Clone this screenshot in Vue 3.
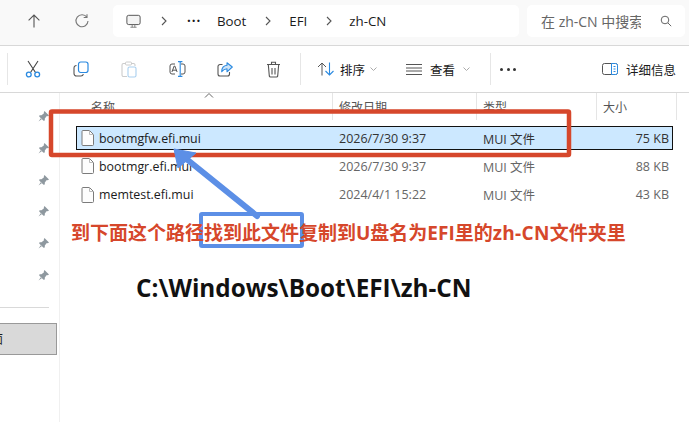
<script setup>
const rows = [
  { name: 'bootmgfw.efi.mui', date: '2026/7/30 9:37', type: 'MUI 文件', size: '75 KB', selected: true },
  { name: 'bootmgr.efi.mui', date: '2026/7/30 9:37', type: 'MUI 文件', size: '88 KB', selected: false },
  { name: 'memtest.efi.mui', date: '2024/4/1 15:22', type: 'MUI 文件', size: '43 KB', selected: false },
]
const pins = 6
</script>

<template>
  <div class="page">
    <header class="topbar">
      <button class="nav">
        <svg width="16" height="16" viewBox="0 0 16 16"><path d="M8 14.500V2M2.600 7.400 8 2l5.400 5.400" class="ln" /></svg>
      </button>
      <button class="nav">
        <svg width="16" height="16" viewBox="0 0 16 16"><path d="M12.900 4.300A6 6 0 1 0 14 8M13 1.200v3.300H9.700" class="ln lighter" /></svg>
      </button>
      <div class="address">
        <svg class="monitor" width="15" height="15" viewBox="0 0 17 16"><rect x="1" y="1" width="15" height="10.500" rx="2" fill="#f4f4f4" stroke="#555" stroke-width="1.100" /><path d="M5 14.500h7M7 11.500v3M10 11.500v3" stroke="#777" fill="none" /></svg>
        <svg class="chev c1" width="6" height="10" viewBox="0 0 6 10"><path d="m1 1 4 4-4 4" class="ln" /></svg>
        <span class="crumb-dots">···</span>
        <span class="crumb boot">Boot</span>
        <svg class="chev c2" width="6" height="10" viewBox="0 0 6 10"><path d="m1 1 4 4-4 4" class="ln" /></svg>
        <span class="crumb efi">EFI</span>
        <svg class="chev c3" width="6" height="10" viewBox="0 0 6 10"><path d="m1 1 4 4-4 4" class="ln" /></svg>
        <span class="crumb zh">zh-CN</span>
      </div>
      <div class="search">
        <span class="search-text">在 zh-CN 中搜索</span>
        <svg width="12" height="12" viewBox="0 0 12 12"><circle cx="5" cy="5" r="3.800" fill="none" stroke="#666" /><path d="m8 8 3.200 3.200" stroke="#666" /></svg>
      </div>
    </header>

    <div class="toolbar">
      <i class="sep first"></i>
      <button class="tool">
        <svg width="16" height="18" viewBox="0 0 16 18"><path d="M3 1l7.500 11.500M13 1 5.500 12.500" stroke="#444" fill="none" stroke-width="1.100" /><circle cx="3.800" cy="14.500" r="2.400" fill="none" stroke="#2b8ae0" stroke-width="1.300" /><circle cx="12.200" cy="14.500" r="2.400" fill="none" stroke="#2b8ae0" stroke-width="1.300" /></svg>
      </button>
      <button class="tool">
        <svg width="16" height="16" viewBox="0 0 16 16"><rect x="5.500" y="1" width="9.500" height="10.500" rx="2.200" fill="none" stroke="#2b8ae0" stroke-width="1.200" /><path d="M3.500 4.500 A2.500 2.500 0 0 0 1 7v5.500A2.500 2.500 0 0 0 3.500 15H8a2.500 2.500 0 0 0 2.400-1.800" fill="none" stroke="#555" stroke-width="1.100" /></svg>
      </button>
      <button class="tool">
        <svg width="16" height="17" viewBox="0 0 16 17"><path d="M5 2.500H2.500A1.500 1.500 0 0 0 1 4v10a1.500 1.500 0 0 0 1.500 1.500H6M11 2.500h1.500A1.500 1.500 0 0 1 14 4v1" fill="none" stroke="#ccc" stroke-width="1.100" /><rect x="4.500" y="1" width="6" height="3" rx="1" fill="#fff" stroke="#ccc" /><rect x="7" y="6" width="8" height="10" rx="1.500" fill="none" stroke="#a9cfef" stroke-width="1.100" /></svg>
      </button>
      <button class="tool">
        <svg width="17" height="16" viewBox="0 0 17 16"><path d="M6 3H3a2 2 0 0 0-2 2v6a2 2 0 0 0 2 2h3M12 3h2a2 2 0 0 1 2 2v6a2 2 0 0 1-2 2h-2" fill="none" stroke="#555" /><path d="M2.900 11 5.200 5h.6l2.300 6M3.700 9.200h3.600" fill="none" stroke="#555" /><path d="M9 .6h2.200m0 0h2.200M11.200.6v14.800M9 15.400h4.400" fill="none" stroke="#2b8ae0" stroke-width="1.100" /></svg>
      </button>
      <button class="tool">
        <svg width="16" height="15" viewBox="0 0 16 15"><path d="M5.500 2.500H3a2 2 0 0 0-2 2V12a2 2 0 0 0 2 2h7.500a2 2 0 0 0 2-2V10" fill="none" stroke="#555" stroke-width="1.100" /><path d="M15.300 5 10 .8v2.500C6.500 3.600 4.700 6.300 4.700 9.800c1.400-2 3-2.900 5.300-3v3z" fill="#cfe4f7" stroke="#2b8ae0" stroke-width="1.100" stroke-linejoin="round" /></svg>
      </button>
      <button class="tool">
        <svg width="15" height="17" viewBox="0 0 15 17"><path d="M1 3.500h13M5.500 3.500V1.300h4v2.200M2.300 3.500l1 11.500a1.300 1.300 0 0 0 1.300 1h5.800a1.300 1.300 0 0 0 1.300-1l1-11.500M6 7v6.500M9 7v6.500" fill="none" stroke="#555" stroke-width="1.100" /></svg>
      </button>
      <i class="sep second"></i>
      <div class="group sort">
        <svg width="18" height="14" viewBox="0 0 18 14"><path d="M5 13.500V1M1 5l4-4 4 4" fill="none" stroke="#555" /><path d="M12.500 .5V13M8.500 9l4 4 4-4" fill="none" stroke="#2b8ae0" stroke-width="1.100" /></svg>
        <span>排序</span>
        <svg width="7" height="4" viewBox="0 0 7 4"><path d="m.5.500 3 3 3-3" fill="none" stroke="#aaa" /></svg>
      </div>
      <div class="group view">
        <svg width="16" height="11" viewBox="0 0 16 11"><path d="M0 .5h16M0 4h16M0 7h16M0 10.500h16" stroke="#555" fill="none" /></svg>
        <span>查看</span>
        <svg width="7" height="4" viewBox="0 0 7 4"><path d="m.5.500 3 3 3-3" fill="none" stroke="#aaa" /></svg>
      </div>
      <i class="sep third"></i>
      <span class="more">
        <b></b><b></b><b></b>
      </span>
      <div class="details">
        <svg width="16" height="12" viewBox="0 0 16 12"><rect x=".5" y=".5" width="15" height="11" rx="2" fill="none" stroke="#555" /><path d="M9.500 .5h4a2 2 0 0 1 2 2v7a2 2 0 0 1-2 2h-4z" fill="#fff" stroke="#2b8ae0" /><path d="M11.500 3.500h2M11.500 6h2M11.500 8.500h2" stroke="#2b8ae0" /></svg>
        <span>详细信息</span>
      </div>
    </div>

    <div class="body">
      <aside class="side">
        <div class="pins">
          <svg v-for="n in pins" :key="n" width="11" height="11" viewBox="0 0 11 11"><path d="M6.500 0 11 4.500 9.800 5.200 8.800 5 6.800 7.500 6.800 9.500 5.500 9.800 1.200 5.500 1.500 4.200 3.500 4.200 6 2.200 5.800 1.200ZM3 7 .5 10.500 4 8Z" fill="#8e989f" /></svg>
        </div>
        <hr class="side-line" />
        <div class="side-item"><span>桌面</span></div>
      </aside>

      <main class="content">
        <div class="head">
          <svg class="caret" width="10" height="5" viewBox="0 0 10 5"><path d="m1 4.500 4-4 4 4" fill="none" stroke="#666" /></svg>
          <span class="h-name">名称</span>
          <span class="h-date">修改日期</span>
          <span class="h-type">类型</span>
          <span class="h-size">大小</span>
          <span class="h-rest"></span>
        </div>
        <div class="list">
          <div v-for="r in rows" :key="r.name" class="row" :class="{ selected: r.selected }">
            <span class="c-name">
              <svg width="13" height="16" viewBox="0 0 13 16"><path d="M1 1.500A1 1 0 0 1 2 .5h6.500L12.500 4.500V14.500a1 1 0 0 1-1 1H2a1 1 0 0 1-1-1z" fill="#fdfdfd" stroke="#7b7b7b" /><path d="M8.500 .5v4h4" fill="none" stroke="#bbb" /></svg>
              {{ r.name }}
            </span>
            <span class="c-date">{{ r.date }}</span>
            <span class="c-type">{{ r.type }}</span>
            <span class="c-size">{{ r.size }}</span>
          </div>
        </div>
      </main>
    </div>

    <svg class="marks" width="689" height="422" viewBox="0 0 689 422">
      <rect x="51" y="111.500" width="518" height="43.500" rx="1" fill="none" stroke="#d6472b" stroke-width="4.500" />
      <rect x="201" y="214" width="101" height="32" rx="1" fill="none" stroke="#5c8fe6" stroke-width="4" />
      <path d="M257 216 184 157" stroke="#5c8fe6" stroke-width="6" stroke-linecap="round" />
      <path d="M174 149 196 153 178 168Z" fill="#5c8fe6" stroke="#5c8fe6" stroke-linejoin="round" />
    </svg>
    <p class="note">到下面这个路径找到此文件复制到U盘名为EFI里的<span class="zh-note">zh-CN</span>文件夹里</p>
    <p class="path">C:\Windows\Boot\EFI\zh-CN</p>
  </div>
</template>

<style>
html, body { margin: 0; background: #fff; }
</style>

<style scoped>
.page {
  position: relative;
  width: 689px;
  height: 422px;
  overflow: hidden;
  background: #fff;
  font-family: "Open Sans", "Noto Sans CJK SC", sans-serif;
  font-size: 12.500px;
  color: #1b1b1b;
}
.ln { fill: none; stroke: #555; stroke-width: 1.100; }
.lighter { stroke: #777; }
button { border: 0; background: none; padding: 0; display: flex; align-items: center; justify-content: center; }

.topbar {
  height: 46px;
  box-sizing: border-box;
  border-bottom: 1px solid #d8d8d8;
  background: #f9f9f9;
  display: flex;
  align-items: flex-start;
  padding: 5px 0 0 10px;
}
.nav { width: 48px; height: 32px; }
.address {
  width: 406px;
  height: 32px;
  margin-left: 7px;
  background: #fff;
  border-radius: 5px;
  display: flex;
  align-items: center;
  padding-left: 13px;
  box-sizing: border-box;
  font-size: 13.300px;
}
.c1 { margin-left: 20px; }
.crumb-dots { margin-left: 20px; font-weight: 700; letter-spacing: 1px; width: 16px; }
.boot { margin-left: 14px; }
.c2 { margin-left: 19px; }
.efi { margin-left: 18px; }
.c3 { margin-left: 19px; }
.zh { margin-left: 17px; }
.search {
  width: 158px;
  height: 32px;
  margin-left: 8px;
  background: #fff;
  border-radius: 5px;
  display: flex;
  align-items: center;
  justify-content: space-between;
  padding: 0 13px 0 14px;
  box-sizing: border-box;
  color: #666;
  font-size: 14px;
}
.search-text { width: 100px; overflow: hidden; white-space: nowrap; }

.toolbar {
  height: 47px;
  box-sizing: border-box;
  border-bottom: 1px solid #d8d8d8;
  display: flex;
  align-items: center;
}
.sep { width: 1px; height: 32px; background: #e6e6e6; }
.first { margin-left: 7px; }
.second { margin-left: 3px; }
.third { margin-left: 20px; }
.tool { width: 48px; height: 32px; margin-left: 0; }
.tool:first-of-type { margin-left: 1px; }
.group { display: flex; align-items: center; }
.sort { margin-left: 16px; gap: 5px; width: 76px; }
.view { margin-left: 13px; gap: 8px; }
.more { margin-left: 9px; display: flex; gap: 3.500px; }
.more b { width: 3px; height: 3px; border-radius: 50%; background: #333; }
.details { margin-left: 86px; display: flex; align-items: center; gap: 8px; }

.body { display: flex; height: 329px; }
.side { width: 59px; flex: none; border-right: 1px solid #f0f0f0; }
.pins {
  display: flex;
  flex-direction: column;
  align-items: flex-end;
  gap: 20.800px;
  padding: 18px 5px 0 0;
  box-sizing: border-box;
  width: 54px;
}
.side-line { margin: 26px 0 0; width: 49px; height: 1px; border: 0; background: #d9d9d9; }
.side-item {
  margin-top: 15px;
  width: 57px;
  height: 32px;
  box-sizing: border-box;
  background: #d9d9d9;
  border: 1px solid #999;
  border-left: 0;
  overflow: hidden;
  display: flex;
  align-items: center;
}
.side-item span { margin-left: -21px; color: #1b1b1b; font-size: 12px; white-space: nowrap; }

.content { flex: 1; min-width: 0; }
.head {
  position: relative;
  height: 27px;
  display: grid;
  grid-template-columns: 272px 144px 120px 80px 1fr;
  color: #555;
  font-size: 12px;
}
.head span { display: flex; align-items: center; }
.head span + span { border-left: 1px solid #e5e5e5; padding-left: 6px; }
.h-name { padding-left: 31px; }
.caret { position: absolute; left: 144px; top: 0; }

.list {
  padding: 6px 0 0 16px;
  display: flex;
  flex-direction: column;
  gap: 4.300px;
}
.row {
  width: 597px;
  height: 24px;
  box-sizing: border-box;
  display: grid;
  grid-template-columns: 256px 144px 120px 1fr;
  align-items: center;
  color: #666;
  border: 1px solid transparent;
  white-space: nowrap;
}
.row.selected {
  background: #cce8ff;
  border-color: #111;
  color: #333;
}
.c-name { display: flex; align-items: center; gap: 5px; padding-left: 4px; color: #1b1b1b; font-size: 12.400px; }
.c-date { padding-left: 6px; }
.c-type { padding-left: 6px; }
.c-size { text-align: right; padding-right: 3px; }

.marks { position: absolute; left: 0; top: 0; pointer-events: none; }
.note {
  position: absolute;
  left: 71px;
  top: 219px;
  margin: 0;
  font-size: 19px;
  font-weight: 700;
  line-height: 28px;
  white-space: nowrap;
  color: #d6472b;
}
.zh-note { letter-spacing: .3px; }
.path {
  position: absolute;
  left: 136px;
  top: 272px;
  margin: 0;
  font-size: 24.300px;
  font-weight: 700;
  line-height: 32px;
  white-space: nowrap;
  color: #111;
}
</style>
